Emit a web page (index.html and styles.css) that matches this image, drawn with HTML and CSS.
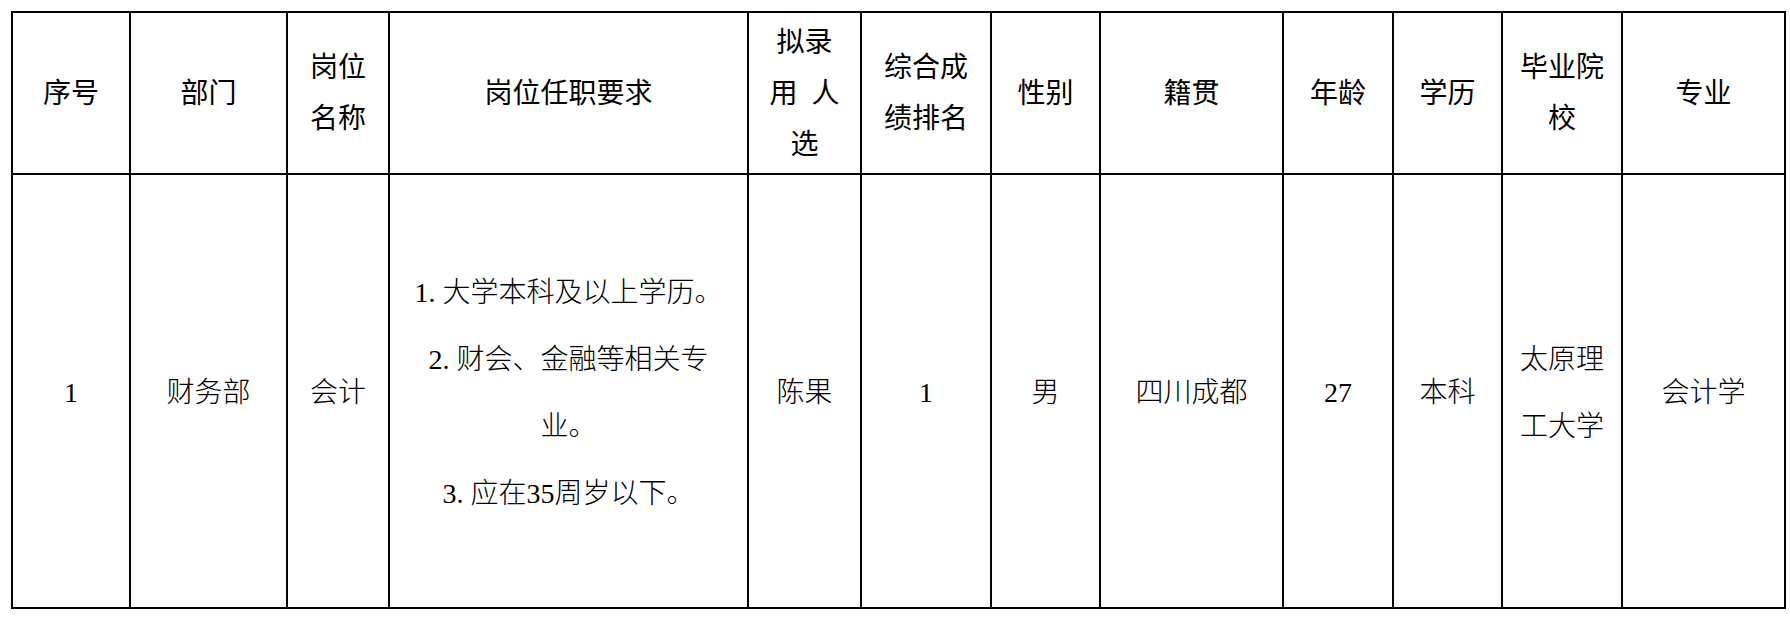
FILE: index.html
```html
<!DOCTYPE html>
<html lang="zh-CN">
<head>
<meta charset="utf-8">
<title>拟录用人选</title>
<link rel="stylesheet" href="styles.css">
</head>
<body>
<div class="page">
  <div class="grid">
    <div class="cell head">序号</div>
    <div class="cell head">部门</div>
    <div class="cell head">岗位<br>名称</div>
    <div class="cell head">岗位任职要求</div>
    <div class="cell head">拟录<br>用&nbsp;&nbsp;人<br>选</div>
    <div class="cell head">综合成<br>绩排名</div>
    <div class="cell head">性别</div>
    <div class="cell head">籍贯</div>
    <div class="cell head">年龄</div>
    <div class="cell head">学历</div>
    <div class="cell head">毕业院<br>校</div>
    <div class="cell head">专业</div>

    <div class="cell body">1</div>
    <div class="cell body">财务部</div>
    <div class="cell body">会计</div>
    <div class="cell body req">1. 大学本科及以上学历。<br>2. 财会、金融等相关专<br>业。<br>3. 应在35周岁以下。</div>
    <div class="cell body">陈果</div>
    <div class="cell body">1</div>
    <div class="cell body">男</div>
    <div class="cell body">四川成都</div>
    <div class="cell body">27</div>
    <div class="cell body">本科</div>
    <div class="cell body school">太原理<br>工大学</div>
    <div class="cell body">会计学</div>
  </div>
</div>
</body>
</html>
```

FILE: styles.css
```css
html, body {
  margin: 0;
  padding: 0;
  background: #ffffff;
}

.page {
  padding: 11px 0 0 11px;
}

.grid {
  display: inline-grid;
  grid-template-columns: 116px 155px 100px 357px 111px 128px 107px 181px 108px 107px 118px 161px;
  grid-template-rows: 160px 432px;
  gap: 2px;
  padding: 2px;
  background: #000000;
}

.cell {
  background: #ffffff;
  display: flex;
  align-items: center;
  justify-content: center;
  text-align: center;
  color: #000000;
  font-family: "Liberation Serif", "Noto Sans CJK SC", serif;
  font-size: 28px;
}

.head {
  line-height: 51px;
  font-weight: 400;
}

.body {
  line-height: 67px;
  font-weight: 300;
  padding-top: 3px;
}
```
